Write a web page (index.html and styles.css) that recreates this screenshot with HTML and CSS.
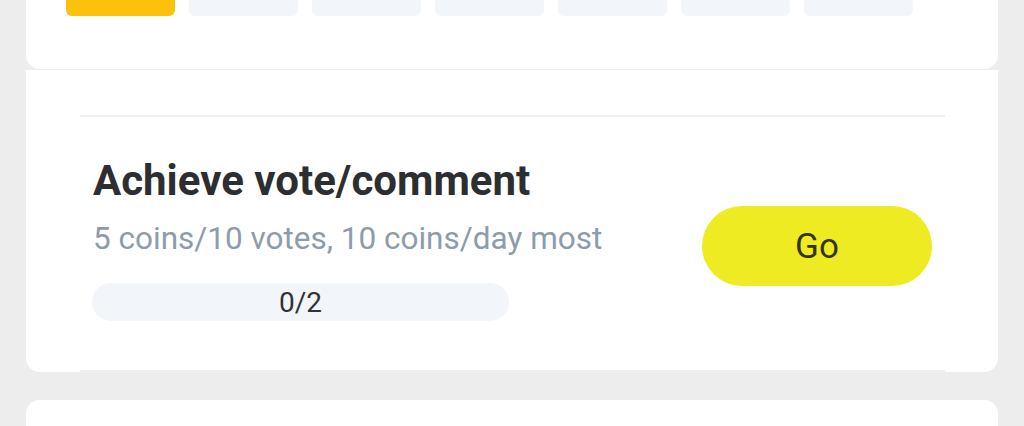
FILE: index.html
```html
<!DOCTYPE html>
<html lang="en">
<head>
<meta charset="utf-8">
<title>Tasks</title>
<link rel="stylesheet" href="styles.css">
</head>
<body>
<div class="page">
  <section class="card card-top">
    <div class="tabs">
      <div class="tab tab-active"></div>
      <div class="tab"></div>
      <div class="tab"></div>
      <div class="tab"></div>
      <div class="tab"></div>
      <div class="tab"></div>
      <div class="tab"></div>
    </div>
  </section>
  <section class="card card-task">
    <div class="task">
      <div class="task-info">
        <h2 class="task-title">Achieve vote/comment</h2>
        <p class="task-desc">5 coins/10 votes, 10 coins/day most</p>
        <div class="progress"><span class="progress-text">0/2</span></div>
      </div>
      <button class="go-btn" type="button">Go</button>
    </div>
  </section>
  <section class="card card-next"></section>
</div>
</body>
</html>
```
FILE: styles.css
```css
* { box-sizing: border-box; }
html, body {
  margin: 0;
  padding: 0;
  background: #ededed;
  font-family: Roboto, "Noto Sans", "Liberation Sans", sans-serif;
  overflow: hidden;
}
.page {
  width: 1024px;
  height: 426px;
  padding: 0 26px;
  display: flex;
  flex-direction: column;
}
.card {
  background: #ffffff;
  width: 972px;
  flex-shrink: 0;
}
.card-top {
  margin-top: -40px;
  padding: 0 40px 53px;
  border-radius: 0 0 14px 14px;
}
.tabs {
  display: flex;
  gap: 14px;
}
.tab {
  width: 109px;
  height: 56px;
  border-radius: 6px;
  background: #f2f5f9;
}
.tab-active { background: #fcc10b; }

.card-task {
  margin-top: 1px;
  padding: 45px 53px 0 54px;
  border-radius: 0 0 14px 14px;
  height: 302px;
}
.task {
  border-top: 2px solid #efefef;
  border-bottom: 2px solid #efefef;
  padding: 40px 13px 49px;
  display: flex;
  align-items: center;
  justify-content: space-between;
}
.task-info {
  display: flex;
  flex-direction: column;
}
.task-title {
  margin: 0;
  font-size: 42px;
  line-height: 48px;
  font-weight: 700;
  color: #2d2e31;
}
.task-desc {
  margin: 16px 0 0;
  font-size: 31.5px;
  line-height: 36px;
  color: #8e9bab;
}
.progress {
  margin-top: 26px;
  margin-left: -1px;
  width: 417px;
  height: 38px;
  border-radius: 19px;
  background: #f2f5fa;
  display: flex;
  align-items: center;
  justify-content: center;
}
.progress-text {
  font-size: 28px;
  color: #333333;
}
.go-btn {
  margin-top: 14px;
  width: 230px;
  height: 80px;
  border: none;
  border-radius: 40px;
  background: #efeb22;
  color: #36351a;
  font-family: inherit;
  font-size: 35px;
  padding: 0;
}
.card-next {
  margin-top: 28px;
  height: 26px;
  border-radius: 14px 14px 0 0;
}
```
